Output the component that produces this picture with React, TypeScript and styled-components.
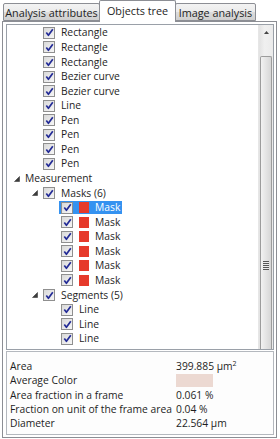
import React from "react";
import styled, { createGlobalStyle } from "styled-components";

const Global = createGlobalStyle`
  html, body { margin: 0; padding: 0; background: #ffffff; }
  body { font-family: "Open Sans", "Noto Sans", sans-serif; font-size: 10.3px; color: #1e1e1e; }
  #root { width: 280px; height: 439px; overflow: hidden; }
`;

const Frame = styled.div`
  width: 280px;
  height: 439px;
  display: flex;
  flex-direction: column;
  background: #ffffff;
`;

const TabStrip = styled.div`
  height: 21px;
  display: flex;
  align-items: flex-end;
  padding-left: 3px;
  position: relative;
  z-index: 1;
`;

const Tab = styled.div<{ $active?: boolean; $w: number }>`
  box-sizing: border-box;
  width: ${(p) => p.$w}px;
  height: ${(p) => (p.$active ? 22 : 18)}px;
  margin-bottom: ${(p) => (p.$active ? -1 : 0)}px;
  margin-left: ${(p) => (p.$active ? -1 : 0)}px;
  margin-right: ${(p) => (p.$active ? -1 : 0)}px;
  border: 1px solid #8c8e94;
  border-bottom: ${(p) => (p.$active ? "none" : "1px solid #8c8e94")};
  border-radius: 2px 2px 0 0;
  background: ${(p) =>
    p.$active ? "#ffffff" : "linear-gradient(#f3f3f3, #ebebeb 50%, #dcdcdc 51%, #cfcfcf)"};
  display: flex;
  align-items: center;
  justify-content: center;
  padding-bottom: ${(p) => (p.$active ? 2 : 0)}px;
  white-space: nowrap;
  font-size: 10.8px;
  color: #1e1e1e;
  position: relative;
  z-index: ${(p) => (p.$active ? 2 : 1)};
`;

const Panel = styled.div`
  flex: 1;
  margin: 0 3px 1px 2px;
  border: 1px solid #8c8e94;
  background: #ffffff;
  display: flex;
  flex-direction: column;
  padding: 2px 2px 2px 3px;
  min-height: 0;
`;

const TreeBox = styled.div`
  height: 326px;
  box-sizing: border-box;
  border: 1px solid #9aa0a8;
  display: flex;
  background: #ffffff;
`;

const TreeList = styled.div`
  flex: 1;
  padding-top: 0.6px;
  overflow: hidden;
`;

const Row = styled.div<{ $level: number }>`
  height: 14.57px;
  display: flex;
  align-items: center;
  padding-left: ${(p) => 3 + p.$level * 18}px;
  white-space: nowrap;
`;

const Expander = styled.div`
  width: 14px;
  height: 14px;
  flex: none;
  display: flex;
  align-items: center;
  justify-content: flex-start;
  padding-left: 4px;
  box-sizing: border-box;
`;

const Content = styled.div<{ $selected?: boolean }>`
  display: inline-flex;
  align-items: center;
  gap: 6px;
  height: 13px;
  margin-left: -1px;
  padding: 0 2px;
  background: ${(p) => (p.$selected ? "#3592f0" : "transparent")};
  color: ${(p) => (p.$selected ? "#ffffff" : "#1e1e1e")};
`;

const Box = styled.div`
  width: 12px;
  height: 12px;
  box-sizing: border-box;
  border: 1px solid #8f8f8f;
  background: linear-gradient(135deg, #d9d9d9, #f6f6f6);
  flex: none;
  display: flex;
  align-items: center;
  justify-content: center;
`;

const Swatch = styled.div<{ $color: string }>`
  width: 10px;
  height: 11px;
  background: ${(p) => p.$color};
  flex: none;
  margin-left: 0px;
`;

const Label = styled.span`
  line-height: 13px;
`;

const Scrollbar = styled.div`
  width: 15px;
  flex: none;
  display: flex;
  flex-direction: column;
  background: linear-gradient(to right, #e2e2e2, #f0f0f0 40%, #ebebeb);
  border-left: 1px solid #e6e6e6;
  box-sizing: border-box;
`;

const ArrowBtn = styled.div`
  height: 31px;
  display: flex;
  justify-content: center;
  padding-top: 6px;
  box-sizing: border-box;
`;

const Thumb = styled.div`
  flex: 1;
  margin: 0 1px;
  border: 1px solid #9c9c9c;
  border-bottom: none;
  border-radius: 2px 2px 0 0;
  background: linear-gradient(to right, #f2f2f2, #e4e4e4 50%, #d6d6d6);
  display: flex;
  justify-content: center;
  padding-top: 204px;
  box-sizing: border-box;
`;

const Grip = styled.div`
  width: 6px;
  height: 9px;
  background: repeating-linear-gradient(#555 0 1px, #eaeaea 1px 2px);
`;

const PropsBox = styled.div`
  flex: 1;
  margin-top: 1px;
  border: 1px solid #b4b8be;
  background: #fdfdfd;
  padding: 7px 0 0 3px;
  display: grid;
  grid-template-columns: 166px 1fr;
  grid-auto-rows: 14.3px;
  align-content: start;
  align-items: center;
  white-space: nowrap;
`;

const PropName = styled.div`
  line-height: 14px;
`;

const PropValue = styled.div`
  line-height: 14px;
  display: flex;
  align-items: center;
`;

const ColorChip = styled.div<{ $color: string }>`
  width: 37px;
  height: 13px;
  background: ${(p) => p.$color};
`;

const Check = () => (
  <Box>
    <svg width="9" height="9" viewBox="0 0 9 9">
      <path d="M1.3 4.6 L3.4 7.3 L7.8 1.2" fill="none" stroke="#232b96" strokeWidth="1.7" strokeLinejoin="round" />
    </svg>
  </Box>
);

const Expanded = () => (
  <svg width="6" height="6" viewBox="0 0 6 6">
    <path d="M5.5 0.5 L5.5 5.5 L0.5 5.5 Z" fill="#3c3c3c" stroke="#3c3c3c" strokeWidth="0.6" />
  </svg>
);

type Node = {
  level: number;
  label: string;
  arrow?: boolean;
  check?: boolean;
  swatch?: string;
  selected?: boolean;
};

const RED = "#e63a2b";

const nodes: Node[] = [
  { level: 1, check: true, label: "Rectangle" },
  { level: 1, check: true, label: "Rectangle" },
  { level: 1, check: true, label: "Rectangle" },
  { level: 1, check: true, label: "Bezier curve" },
  { level: 1, check: true, label: "Bezier curve" },
  { level: 1, check: true, label: "Line" },
  { level: 1, check: true, label: "Pen" },
  { level: 1, check: true, label: "Pen" },
  { level: 1, check: true, label: "Pen" },
  { level: 1, check: true, label: "Pen" },
  { level: 0, arrow: true, label: "Measurement" },
  { level: 1, arrow: true, check: true, label: "Masks (6)" },
  { level: 2, check: true, swatch: RED, label: "Mask", selected: true },
  { level: 2, check: true, swatch: RED, label: "Mask" },
  { level: 2, check: true, swatch: RED, label: "Mask" },
  { level: 2, check: true, swatch: RED, label: "Mask" },
  { level: 2, check: true, swatch: RED, label: "Mask" },
  { level: 2, check: true, swatch: RED, label: "Mask" },
  { level: 1, arrow: true, check: true, label: "Segments (5)" },
  { level: 2, check: true, label: "Line" },
  { level: 2, check: true, label: "Line" },
  { level: 2, check: true, label: "Line" },
];

const props: { name: string; value?: string; color?: string; sup?: boolean }[] = [
  { name: "Area", value: "399.885 µm", sup: true },
  { name: "Average Color", color: "#ecd9d2" },
  { name: "Area fraction in a frame", value: "0.061 %" },
  { name: "Fraction on unit of the frame area", value: "0.04 %" },
  { name: "Diameter", value: "22.564 µm" },
];

const Sup = styled.sup`
  font-size: 7px;
  vertical-align: 4px;
  line-height: 0;
`;

export default function App() {
  return (
    <Frame>
      <Global />
      <TabStrip>
        <Tab $w={97}>Analysis attributes</Tab>
        <Tab $w={77} $active>
          Objects tree
        </Tab>
        <Tab $w={81}>Image analysis</Tab>
      </TabStrip>
      <Panel>
        <TreeBox>
          <TreeList>
            {nodes.map((n, i) => (
              <Row key={i} $level={n.level}>
                <Expander>{n.arrow ? <Expanded /> : null}</Expander>
                <Content $selected={n.selected}>
                  {n.check && <Check />}
                  {n.swatch && <Swatch $color={n.swatch} />}
                  <Label>{n.label}</Label>
                </Content>
              </Row>
            ))}
          </TreeList>
          <Scrollbar>
            <ArrowBtn>
              <svg width="5" height="3" viewBox="0 0 5 3">
                <path d="M0 3 L2.5 0 L5 3 Z" fill="#444" />
              </svg>
            </ArrowBtn>
            <Thumb>
              <Grip />
            </Thumb>
          </Scrollbar>
        </TreeBox>
        <PropsBox>
          {props.map((p) => (
            <React.Fragment key={p.name}>
              <PropName>{p.name}</PropName>
              <PropValue>
                {p.color ? (
                  <ColorChip $color={p.color} />
                ) : (
                  <span>
                    {p.value}
                    {p.sup && <Sup>2</Sup>}
                  </span>
                )}
              </PropValue>
            </React.Fragment>
          ))}
        </PropsBox>
      </Panel>
    </Frame>
  );
}
